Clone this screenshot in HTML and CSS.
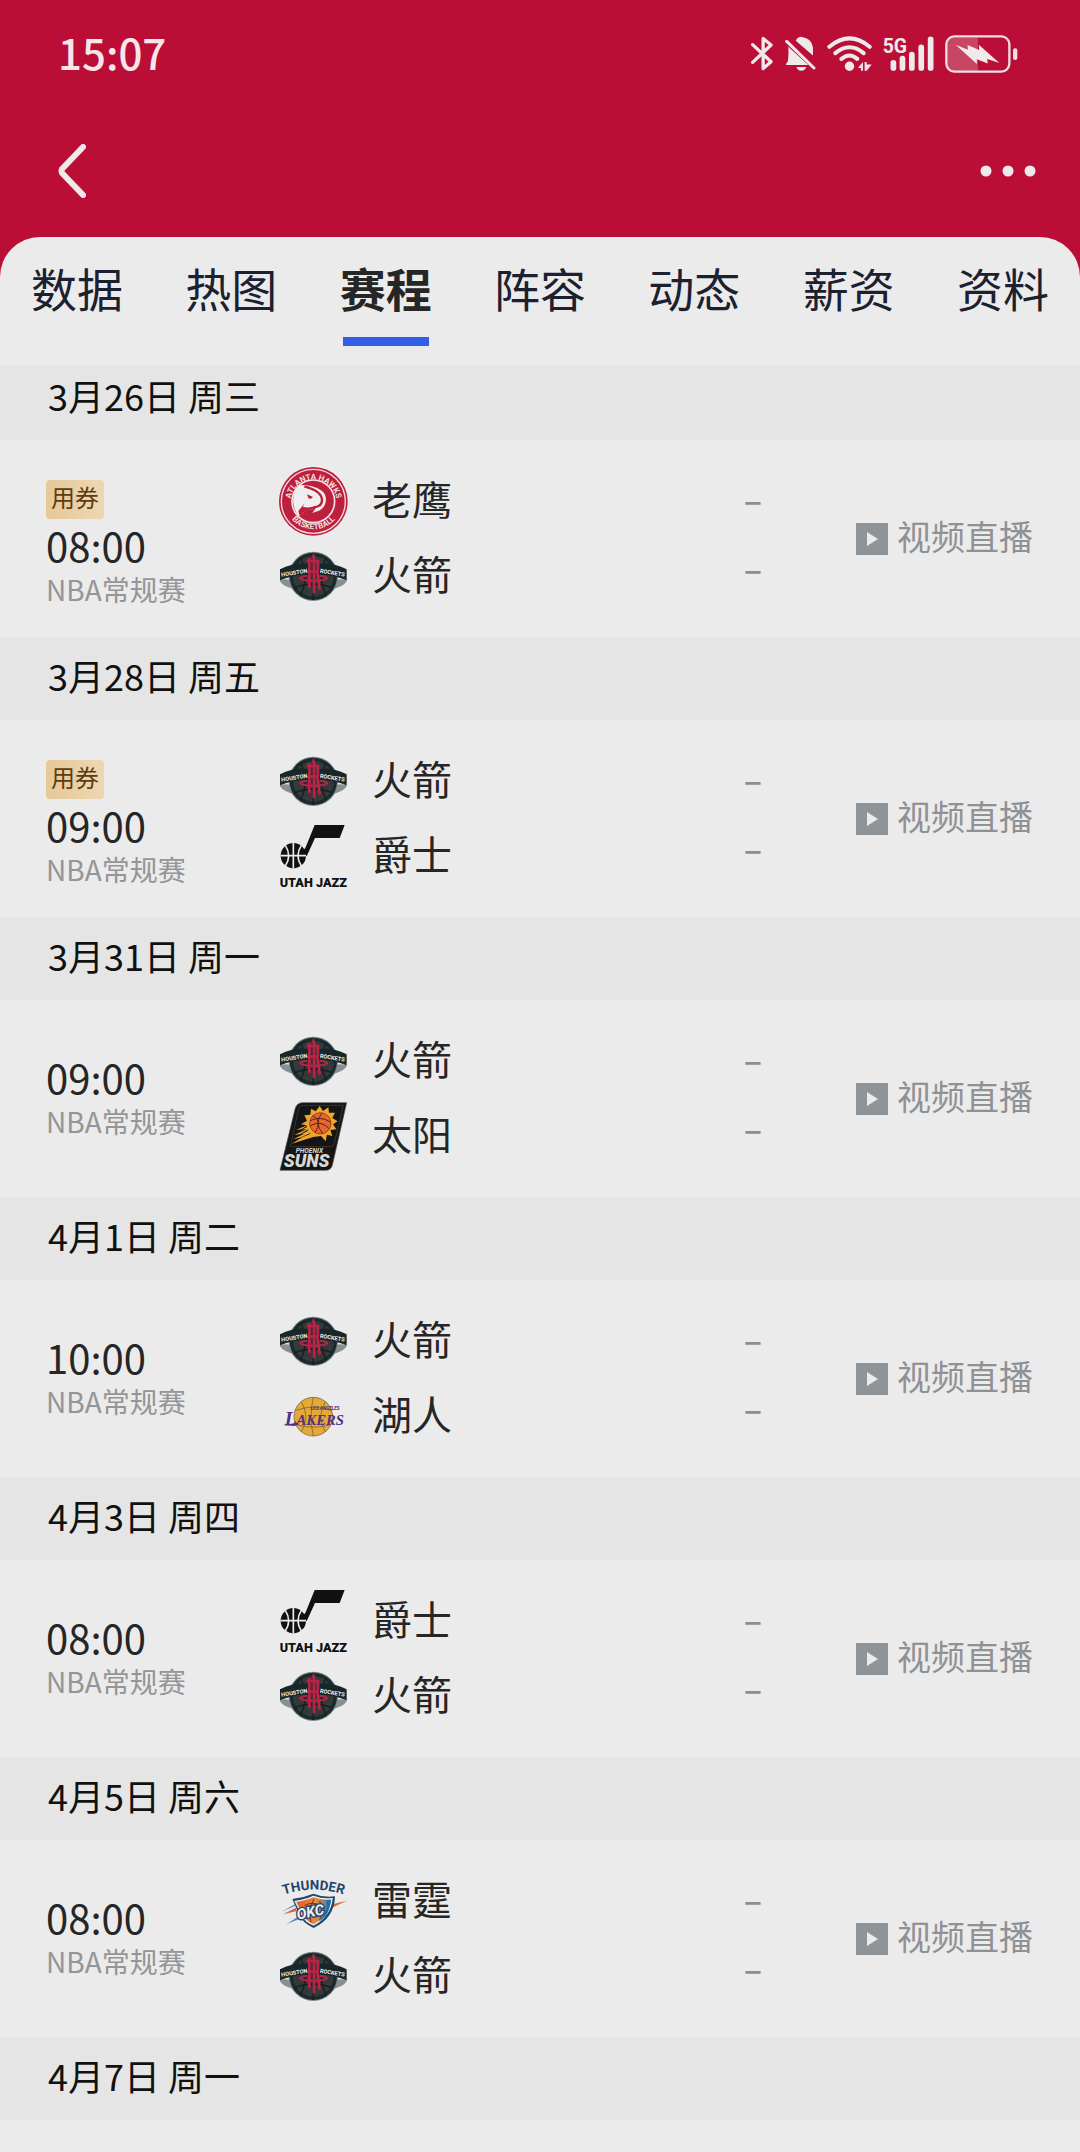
FILE: index.html
```html
<!DOCTYPE html>
<html lang="zh-CN">
  <head>
    <meta charset="UTF-8" />
    <meta name="viewport" content="width=device-width, initial-scale=1.0" />
    <title>赛程</title>
    <link rel="stylesheet" href="styles.css" />
  </head>
  <body>
    <!-- team logos -->
    <svg class="sprite" aria-hidden="true">
      <defs>
        <linearGradient id="shield" x1="0" y1="0" x2="1" y2="0">
          <stop offset="0" stop-color="#e2572b" />
          <stop offset="0.55" stop-color="#e98a3c" />
          <stop offset="1" stop-color="#2f7fc0" />
        </linearGradient>
        <path id="arc-top" d="M34 116A70 70 0 1 1 173 116" />
        <path id="arc-bottom" d="M18 116A87 87 0 0 0 189 116" />
        <path id="arc-thunder" d="M4 86Q104 50 204 86" />
      </defs>
      <symbol id="hawks" viewBox="0 0 207 207">
        <circle cx="103" cy="103" r="103" fill="#bd1f3c" />
        <circle cx="103" cy="103" r="96" fill="none" stroke="#f0dfe1" stroke-width="4" />
        <circle cx="103" cy="103" r="64" fill="#bd1f3c" stroke="#f0e6e7" stroke-width="5" />
        <path fill="#f0eeee" d="M66 54C92 54 122 62 135 78C147 96 140 122 120 131L100 138L107 128L86 126L60 148C38 124 36 80 58 58Z" />
        <path fill="none" stroke="#bd1f3c" stroke-width="7" d="M76 58C106 66 128 78 129 98C130 112 120 119 106 121" />
        <path fill="#bd1f3c" d="M84 82L102 90Q96 99 88 93ZM58 132L76 110L72 120Q92 124 110 116L108 128L86 127L62 146Z" />
        <text class="mark hawks-text"><textPath href="#arc-top" startOffset="50%">ATLANTA HAWKS</textPath></text>
        <text class="mark hawks-text"><textPath href="#arc-bottom" startOffset="50%">BASKETBALL</textPath></text>
      </symbol>
      <symbol id="rockets" viewBox="0 0 207 207">
        <path fill="#8b8e90" d="M3 113L48 108L58 144Q12 136 3 118ZM203 113L158 108L148 144Q194 136 203 118Z" />
        <path fill="#e5e6e6" d="M9 111L44 102L48 114ZM197 111L162 102L158 114Z" />
        <circle cx="103" cy="103" r="74" fill="#78898b" />
        <circle cx="103" cy="103" r="71" fill="#1c292d" />
        <circle cx="103" cy="103" r="61" fill="#34393a" />
        <path fill="none" stroke="#141e21" stroke-width="4" d="M103 32V174M48 72Q103 98 158 72M48 136Q104 116 158 136M65 48Q92 103 65 158M141 48Q114 103 141 158" />
        <path fill="#17272a" d="M3 82Q46 60 88 66V98Q40 98 3 115ZM203 82Q160 60 118 66V98Q166 98 203 115Z" />
        <path fill="none" stroke="#bd2145" stroke-width="8" d="M91 48V138M105 42V154M117 54V86M83 57H119M91 88H115L122 143" />
        <path fill="none" stroke="#bd2145" stroke-width="6" d="M84 101Q62 104 64 109Q70 116 104 116Q138 116 144 109Q146 104 122 101" />
        <path fill="#bd2145" d="M98 48L103 30L109 48Z" />
        <text class="mark rockets-text" x="46" y="98" transform="rotate(-9 46 92)">HOUSTON</text>
        <text class="mark rockets-text" x="160" y="98" transform="rotate(9 160 92)">ROCKETS</text>
      </symbol>
      <symbol id="jazz" viewBox="0 0 207 207">
        <path fill="#111" d="M107 9H197L182 48H108L83 103L72 87L80 76Z" />
        <circle cx="43" cy="101" r="38" fill="#111" />
        <path fill="none" stroke="#ececec" stroke-width="5" d="M43 63V139M5 101H81M19 70Q39 101 19 132M67 70Q47 101 67 132" />
        <text class="mark jazz-text" x="103" y="194">UTAH JAZZ</text>
      </symbol>
      <symbol id="suns" viewBox="0 0 207 207">
        <path fill="#151515" stroke="#555" stroke-width="2" d="M70 2H203L160 190Q156 205 140 205H3L48 22Q53 2 70 2Z" />
        <path fill="none" stroke="#4a4543" stroke-width="2" d="M70 10H193L166 124Q164 134 154 134H34L58 22Q60 10 70 10Z" />
        <path fill="#f0a52d" d="M76 40L94 38L96 20L110 28L122 12L132 27L148 16L150 32L168 32L160 48L176 58L162 67L172 82L154 84L160 102L144 98L140 118L126 102L103 105L38 125L70 106L42 112L76 95L46 99L82 82L52 83L84 70L66 67L84 56Z" />
        <path fill="#151515" d="M40 118L96 92L92 97ZM44 107L88 82L86 87ZM49 92L84 71L83 76Z" />
        <circle cx="124" cy="64" r="32" fill="#e8662e" stroke="#6c2b1b" stroke-width="2" />
        <path fill="none" stroke="#54241a" stroke-width="3" d="M94 56Q122 40 154 60M93 72Q124 52 151 80M101 41Q132 57 108 92M129 33Q104 62 131 95" />
        <text class="mark phoenix-text" x="91" y="152">PHOENIX</text>
        <text class="mark suns-text" x="83" y="196">SUNS</text>
      </symbol>
      <symbol id="lakers" viewBox="0 0 207 207">
        <circle cx="103" cy="104" r="58" fill="#e5a936" stroke="#695638" stroke-width="2" />
        <path fill="none" stroke="#695638" stroke-width="2" d="M48 86Q103 65 158 86M103 46Q90 104 103 162M67 59Q94 104 67 150M139 59Q112 104 139 150M50 128Q103 143 156 128" />
        <path fill="#543080" d="M14 130L60 121L48 132Z" />
        <text class="mark angeles-text" x="138" y="83">LOS ANGELES</text>
        <text class="mark lakers-text" x="106" y="129"><tspan class="big-l">L</tspan>AKERS</text>
      </symbol>
      <symbol id="thunder" viewBox="0 0 207 207">
        <path fill="#d9683a" d="M12 142L50 122L54 132ZM160 112L203 101L156 124Z" />
        <path fill="#4a90bd" d="M22 172L68 142L75 150ZM46 118L8 134L50 110Z" />
        <path fill="#1f4569" d="M40 96Q74 92 103 80Q132 92 168 88Q166 154 104 183Q70 166 62 146Z" />
        <path fill="url(#shield)" stroke="#f0f0f0" stroke-width="4" d="M49 103Q80 99 103 88Q132 99 159 95Q154 147 104 174Q80 164 70 146Z" />
        <path fill="none" stroke="#762e22" stroke-width="3" d="M76 116Q106 98 136 124M96 166Q84 132 105 96M122 158Q137 134 122 102" />
        <path fill="#1f6fae" d="M118 164Q152 149 155 100L142 99Q148 137 118 164Z" />
        <text class="mark okc-text" x="94" y="150" transform="rotate(-12 94 136)">OKC</text>
        <text class="mark thunder-text"><textPath href="#arc-thunder" startOffset="50%">THUNDER</textPath></text>
      </symbol>
      <symbol id="play" viewBox="0 0 32 32">
        <path fill="#8f9499" d="M0 0H32V32H0Z" />
        <path fill="#ebebeb" d="M11 9L22 16L11 23Z" />
      </symbol>
    </svg>

    <header class="header">
      <div class="status">
        <span class="clock">15:07</span>
        <div class="status-icons">
          <svg class="bluetooth" viewBox="93 48 67 104">
            <path fill="none" stroke="#f0e9ea" stroke-width="10" stroke-linecap="round" stroke-linejoin="round" d="M98 73L154 125L130 146V54L154 74L98 127" />
          </svg>
          <svg class="bell" viewBox="194 48 92 104">
            <path fill="#f0e9ea" d="M204 80L263 134H197Q196 130 201 126Q205 120 204 80ZM226 62Q230 51 241 50Q274 54 277 82V106ZM228 140H257Q254 151 242 151Q231 151 228 140Z" />
            <path stroke="#f0e9ea" stroke-width="9" stroke-linecap="round" d="M199 64L280 143" />
          </svg>
          <svg class="wifi" viewBox="320 48 134 104">
            <g fill="none" stroke="#f0e9ea" stroke-width="12" stroke-linecap="round">
              <path d="M327 80Q387 30 447 80M345 99Q387 64 429 99M363 116Q387 96 410 116" />
            </g>
            <circle cx="387" cy="138" r="14" fill="#f0e9ea" />
            <path fill="#f0e9ea" d="M412 143L427 125V151H421V143ZM432 125H438V133H453L438 151H432Z" />
          </svg>
          <svg class="signal" viewBox="488 48 152 104">
            <path stroke="#f0e9ea" stroke-width="17" stroke-linecap="round" d="M519 128V143M546 115V143M574 103V143M602 82V143M630 58V143" />
            <text x="487" y="98" class="network">5G</text>
          </svg>
          <svg class="battery" viewBox="675 43 220 114">
            <path fill="#c84563" d="M695 50H774V152H695Q681 150 680 134V66Q682 52 695 50Z" />
            <rect x="679" y="47" width="190" height="106" rx="24" fill="none" stroke="#f0dfe2" stroke-width="7" />
            <rect x="880" y="83" width="13" height="35" rx="6" fill="#f0dfe2" />
            <path fill="#f0e9ea" d="M707 72L744 87L743 73L778 88L777 72L839 127L802 115L804 129L771 116V130Z" />
          </svg>
        </div>
      </div>
      <nav class="nav">
        <button class="icon-btn" type="button" aria-label="返回">
          <svg class="back" viewBox="0 0 28 54">
            <path fill="none" stroke="#efe9e9" stroke-width="6" stroke-linecap="round" stroke-linejoin="round" d="M25 3L4 25Q3 27 4 29L25 51" />
          </svg>
        </button>
        <button class="icon-btn" type="button" aria-label="更多">
          <svg class="more" viewBox="0 0 56 12">
            <g fill="#efe9e9">
              <circle cx="6" cy="6" r="5.5" />
              <circle cx="28" cy="6" r="5.5" />
              <circle cx="50" cy="6" r="5.5" />
            </g>
          </svg>
        </button>
      </nav>
    </header>

    <main class="panel">
      <nav class="tabs">
        <a class="tab" href="#data">数据</a>
        <a class="tab" href="#heat">热图</a>
        <a class="tab active" href="#schedule">赛程</a>
        <a class="tab" href="#roster">阵容</a>
        <a class="tab" href="#news">动态</a>
        <a class="tab" href="#salary">薪资</a>
        <a class="tab" href="#info">资料</a>
      </nav>

      <section class="day">
        <h2 class="date first">3月26日 周三</h2>
        <div class="match">
          <div class="info with-badge">
            <span class="badge">用券</span>
            <span class="time">08:00</span>
            <span class="league">NBA常规赛</span>
          </div>
          <div class="teams">
            <div class="team"><svg class="logo"><use href="#hawks" /></svg><span>老鹰</span></div>
            <div class="team"><svg class="logo"><use href="#rockets" /></svg><span>火箭</span></div>
          </div>
          <div class="scores"><span>–</span><span>–</span></div>
          <a class="live" href="#live"><svg class="play"><use href="#play" /></svg><span>视频直播</span></a>
        </div>
      </section>

      <section class="day">
        <h2 class="date">3月28日 周五</h2>
        <div class="match">
          <div class="info with-badge">
            <span class="badge">用券</span>
            <span class="time">09:00</span>
            <span class="league">NBA常规赛</span>
          </div>
          <div class="teams">
            <div class="team"><svg class="logo"><use href="#rockets" /></svg><span>火箭</span></div>
            <div class="team"><svg class="logo"><use href="#jazz" /></svg><span>爵士</span></div>
          </div>
          <div class="scores"><span>–</span><span>–</span></div>
          <a class="live" href="#live"><svg class="play"><use href="#play" /></svg><span>视频直播</span></a>
        </div>
      </section>

      <section class="day">
        <h2 class="date">3月31日 周一</h2>
        <div class="match">
          <div class="info">
            <span class="time">09:00</span>
            <span class="league">NBA常规赛</span>
          </div>
          <div class="teams">
            <div class="team"><svg class="logo"><use href="#rockets" /></svg><span>火箭</span></div>
            <div class="team"><svg class="logo"><use href="#suns" /></svg><span>太阳</span></div>
          </div>
          <div class="scores"><span>–</span><span>–</span></div>
          <a class="live" href="#live"><svg class="play"><use href="#play" /></svg><span>视频直播</span></a>
        </div>
      </section>

      <section class="day">
        <h2 class="date">4月1日 周二</h2>
        <div class="match">
          <div class="info">
            <span class="time">10:00</span>
            <span class="league">NBA常规赛</span>
          </div>
          <div class="teams">
            <div class="team"><svg class="logo"><use href="#rockets" /></svg><span>火箭</span></div>
            <div class="team"><svg class="logo"><use href="#lakers" /></svg><span>湖人</span></div>
          </div>
          <div class="scores"><span>–</span><span>–</span></div>
          <a class="live" href="#live"><svg class="play"><use href="#play" /></svg><span>视频直播</span></a>
        </div>
      </section>

      <section class="day">
        <h2 class="date">4月3日 周四</h2>
        <div class="match">
          <div class="info">
            <span class="time">08:00</span>
            <span class="league">NBA常规赛</span>
          </div>
          <div class="teams">
            <div class="team"><svg class="logo"><use href="#jazz" /></svg><span>爵士</span></div>
            <div class="team"><svg class="logo"><use href="#rockets" /></svg><span>火箭</span></div>
          </div>
          <div class="scores"><span>–</span><span>–</span></div>
          <a class="live" href="#live"><svg class="play"><use href="#play" /></svg><span>视频直播</span></a>
        </div>
      </section>

      <section class="day">
        <h2 class="date">4月5日 周六</h2>
        <div class="match">
          <div class="info">
            <span class="time">08:00</span>
            <span class="league">NBA常规赛</span>
          </div>
          <div class="teams">
            <div class="team"><svg class="logo"><use href="#thunder" /></svg><span>雷霆</span></div>
            <div class="team"><svg class="logo"><use href="#rockets" /></svg><span>火箭</span></div>
          </div>
          <div class="scores"><span>–</span><span>–</span></div>
          <a class="live" href="#live"><svg class="play"><use href="#play" /></svg><span>视频直播</span></a>
        </div>
      </section>

      <section class="day">
        <h2 class="date">4月7日 周一</h2>
      </section>
    </main>
  </body>
</html>
```
FILE: styles.css
```css
* {
  box-sizing: border-box;
  margin: 0;
  padding: 0;
}
body {
  min-height: 100vh;
  font-family: "Noto Sans CJK SC", sans-serif;
  background: linear-gradient(#bb0e37 0, #bb0e37 400px, #ebebeb 400px);
  color: #262626;
}
a {
  color: inherit;
  text-decoration: none;
}
svg {
  display: block;
  flex: none;
}
.sprite {
  position: absolute;
  width: 0;
  height: 0;
}

/* header */
.status {
  display: flex;
  justify-content: space-between;
  align-items: center;
  height: 107px;
  padding: 0 62px 0 58px;
}
.clock {
  font-size: 42px;
  font-weight: 500;
  line-height: 64px;
  padding-bottom: 4px;
  color: #f6e6e9;
}
.status-icons {
  display: flex;
  align-items: center;
}
.bluetooth {
  width: 22px;
  height: 35px;
  margin-right: 12px;
}
.bell {
  width: 31px;
  height: 35px;
  margin-right: 11px;
}
.wifi {
  width: 45px;
  height: 35px;
  margin-right: 11px;
}
.signal {
  width: 51px;
  height: 35px;
  margin-right: 11px;
}
.battery {
  width: 73px;
  height: 38px;
}
.network {
  font-family: Roboto, sans-serif;
  font-size: 58px;
  font-weight: 700;
  fill: #f0e9ea;
}
.nav {
  display: flex;
  justify-content: space-between;
  align-items: center;
  height: 130px;
  padding: 0 34px 2px 48px;
}
.icon-btn {
  padding: 10px;
  border: none;
  background: none;
  cursor: pointer;
}
.back {
  width: 28px;
  height: 54px;
}
.more {
  width: 56px;
  height: 12px;
}

/* tabs */
.panel {
  background: #ebebeb;
  border-radius: 40px 40px 0 0;
}
.tabs {
  display: flex;
  justify-content: space-between;
  height: 129px;
  padding: 14px 31px 0;
}
.tab {
  display: flex;
  flex-direction: column;
  align-items: center;
  font-size: 46px;
  line-height: 72px;
  color: #1b2130;
}
.active {
  font-weight: 700;
  color: #262626;
}
.active::after {
  content: "";
  width: 86px;
  height: 9px;
  margin-top: 14px;
  background: #335fe6;
}

/* schedule */
.date {
  height: 82px;
  padding-left: 48px;
  font-size: 36px;
  font-weight: 400;
  line-height: 74px;
  background: #e5e5e5;
  color: #111;
}
/* the first date is partly scrolled under the tabs */
.first {
  height: 74px;
  line-height: 58px;
}
.match {
  display: grid;
  grid-template-columns: 233px 1fr 50px auto;
  align-items: center;
  height: 198px;
  padding: 0 47px 0 46px;
}
.info {
  display: flex;
  flex-direction: column;
  align-items: flex-start;
}
.with-badge {
  padding-top: 12px;
}
.badge {
  height: 39px;
  margin-bottom: 4px;
  padding: 0 5px;
  border-radius: 4px;
  font-size: 24px;
  line-height: 34px;
  background: linear-gradient(90deg, #e6c899, #edd7b2);
  color: #5c3c12;
}
.time {
  font-size: 40px;
  line-height: 44px;
}
.league {
  font-size: 28px;
  line-height: 44px;
  color: #939598;
}
.teams {
  display: flex;
  flex-direction: column;
  gap: 6px;
}
.team {
  display: flex;
  align-items: center;
  gap: 24px;
  height: 69px;
  font-size: 40px;
  line-height: 58px;
}
.team span {
  padding-bottom: 8px;
}
.logo {
  width: 69px;
  height: 69px;
}
.scores {
  display: flex;
  flex-direction: column;
  align-items: center;
  padding-bottom: 12px;
  font-size: 34px;
  font-weight: 500;
  line-height: 69px;
  color: #8e8e8e;
}
.live {
  display: flex;
  align-items: center;
  gap: 9px;
  margin-left: 78px;
  font-size: 34px;
  line-height: 44px;
  color: #8f9194;
}
.live span {
  padding-bottom: 6px;
}
.play {
  width: 32px;
  height: 32px;
}

/* lettering inside the logos */
.mark {
  font-family: Roboto, sans-serif;
  font-weight: 700;
  text-anchor: middle;
}
.hawks-text {
  font-size: 24px;
  fill: #f0dfe1;
}
.rockets-text {
  font-size: 17px;
  fill: #f0f0f0;
}
.jazz-text {
  font-size: 38px;
  font-weight: 900;
  fill: #111;
}
.phoenix-text {
  font-size: 20px;
  font-style: italic;
  fill: #d8d8d8;
}
.suns-text {
  font-size: 54px;
  font-style: italic;
  font-weight: 900;
  fill: #d8d8d8;
}
.lakers-text {
  font-family: "Liberation Serif", serif;
  font-size: 44px;
  font-style: italic;
  fill: #543080;
}
.big-l {
  font-size: 58px;
}
.angeles-text {
  font-size: 14px;
  font-style: italic;
  fill: #543080;
}
.thunder-text {
  font-size: 40px;
  fill: #1f4569;
}
.okc-text {
  font-size: 44px;
  font-style: italic;
  fill: #f0f0f0;
  stroke: #1f4569;
  stroke-width: 8px;
  paint-order: stroke;
}
```
